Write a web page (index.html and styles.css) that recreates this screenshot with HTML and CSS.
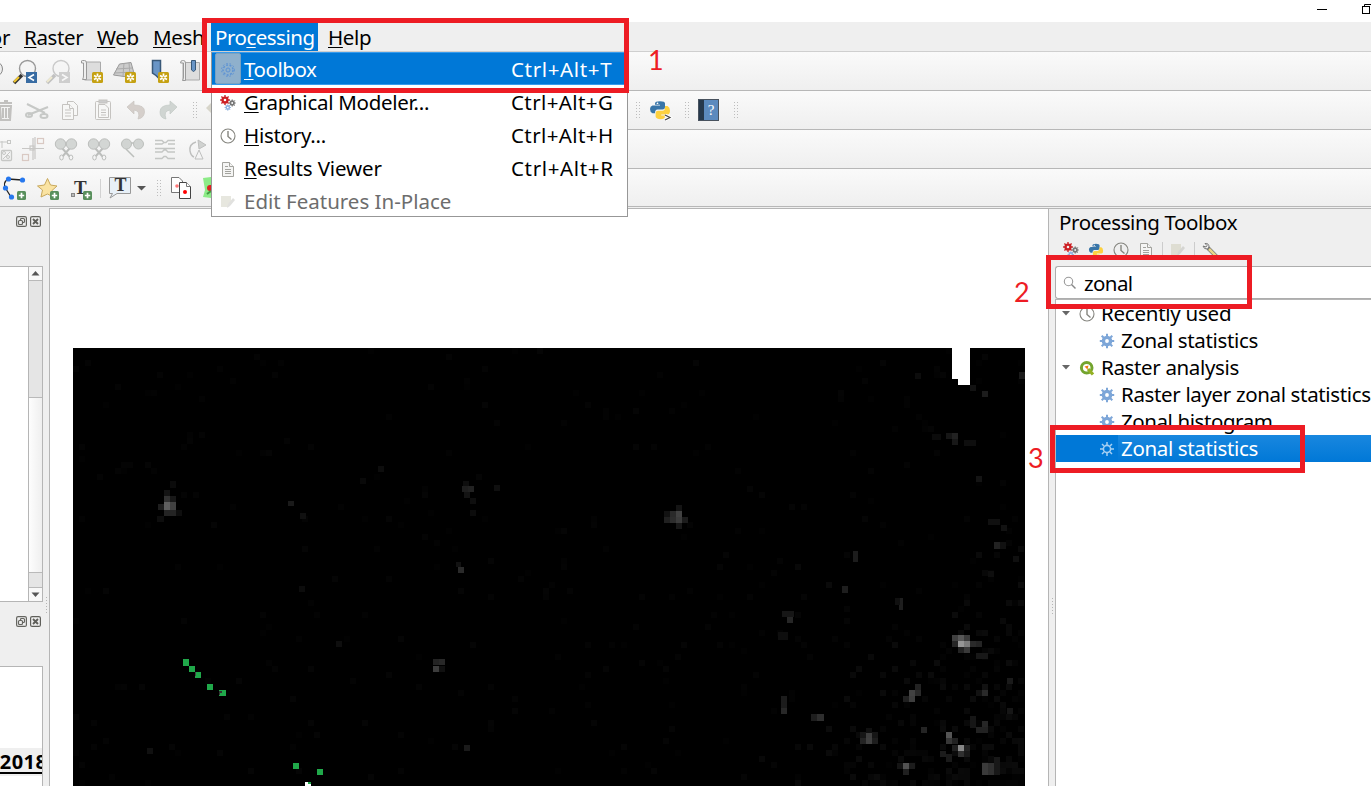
FILE: index.html
```html
<!DOCTYPE html>
<html lang="en">
<head>
<meta charset="utf-8">
<title>QGIS</title>
<link rel="stylesheet" href="styles.css">
</head>
<body>
<svg class="defs" width="0" height="0">
  <defs>
    <g id="gear"><circle r="3.600" fill="none" stroke="currentColor" stroke-width="3.400"/><path d="M0-4V-7.200M0 4V7.200M-4 0H-7.200M4 0H7.200M-3-3L-5.300-5.300M3 3L5.300 5.300M-3 3L-5.300 5.300M3-3L5.300-5.300" stroke="currentColor" stroke-width="2"/></g>
    <g id="models"><use href="#gear" transform="translate(5 5) scale(.68)" color="#cc1f24"/><use href="#gear" transform="translate(12.200 8) scale(.5)" color="#777"/><use href="#gear" transform="translate(7.800 12.500) scale(.45)" color="#8fb2df"/></g>
    <g id="clock" fill="none" stroke="#85857f" stroke-width="1.100"><circle cx="8" cy="8" r="7"/><path d="M8 3V8.500L11.500 11.500" stroke-width="1.400"/></g>
    <g id="doc" fill="#f5f5f4" stroke="#a3a39e"><path d="M2.500 1.500H9.500L13.500 5.500V15.500H2.500Z"/><path d="M9.500 1.500V5.500H13.500M5 5.500H8M5 8.500H11M5 10.500H11M5 12.500H11"/></g>
    <g id="edit"><path d="M1 2H11V9L8 13H1Z" fill="#deddd2"/><path d="M7 14L8 10L13 4L15 6L10 12Z" fill="#d5d5d2"/></g>
    <g id="star-badge"><rect width="11" height="11" rx="1.500" fill="#c5a112"/><path d="M5.500 1.500V9.500M2 3.500L9 7.500M9 3.500L2 7.500" stroke="#fff" stroke-width="1.700"/><circle cx="5.500" cy="5.500" r="1.100" fill="#c5a112"/></g>
    <g id="plus-badge"><rect width="9" height="9" rx="1.500" fill="#588f5c"/><path d="M4.500 1.800V7.200M1.800 4.500H7.200" stroke="#fff" stroke-width="1.700"/></g>
    <g id="python"><path d="M4 7V3Q4 1 8 1T12 3V6Q12 8 10 8H6Q4 8 4 11H2Q0 10 0 7.500T2 4.500H8V4H4Z" fill="#3875a8"/><path d="M12 5H14Q16 6 16 9T14 12H9V13H12V14Q12 16 8.500 16T4.500 14V11Q4.500 9 6.500 9H10Q12 9 12 6Z" fill="#fdd140"/><circle cx="6" cy="2.700" r=".7" fill="#fff"/></g>
    <g id="grip" stroke="#bdbdbd" stroke-width="1" stroke-dasharray="1 2"><path d="M.5 0V17M3.500 0V17"/></g>
    <g id="dock" fill="none" stroke="#666661" stroke-width="1.200"><rect x=".6" y=".6" width="9.800" height="9.800" rx="1.500"/><rect x="4.500" y="2.500" width="4" height="4" rx="1"/><rect x="2.500" y="4.500" width="4" height="4" rx="1" fill="#efefef"/></g>
    <g id="close" fill="none" stroke="#5f5f5a" stroke-width="1.200"><rect x=".6" y=".6" width="9.800" height="9.800" rx="1.500"/><path d="M3 3L8 8M8 3L3 8" stroke-width="1.900"/></g>
    <g id="cut" fill="#d3d6d4" stroke="#bcbebc"><path d="M-4-1L4 8M4-1L-4 8" stroke-width="2"/><circle cx="-5.500" cy="-5" r="5.200"/><circle cx="5.500" cy="-5" r="5.200"/><ellipse cx="-4.500" cy="8.500" rx="1.800" ry="2.500" fill="#f4f4f4"/><ellipse cx="5" cy="8.500" rx="1.800" ry="2.500" fill="#f4f4f4"/></g>
  </defs>
</svg>

<div class="window">
  <div class="titlebar">
    <svg width="60" height="22" viewBox="1311 0 60 22" fill="none" stroke="#000"><path d="M1317 9.500H1327M1364.500 6V4.500H1371"/><rect x="1362.500" y="6.500" width="7" height="7"/></svg>
  </div>
  <nav class="menubar">
    <span class="menu m-vector">Vect<u>o</u>r</span><span class="menu m-raster"><u>R</u>aster</span><span class="menu m-web"><u>W</u>eb</span><span class="menu m-mesh"><u>M</u>esh</span><span class="menu m-processing">Pro<u>c</u>essing</span><span class="menu m-help"><u>H</u>elp</span>
  </nav>

  <div class="toolbar">
    <svg width="211" height="38" viewBox="0 52 211 38">
      <circle cx="-5" cy="69" r="7.500" fill="#eee" stroke="#888"/>
      <path d="M14 83L22 75" stroke="#333" stroke-width="3.500"/><path d="M14 82L19 77" stroke="#f2c830" stroke-width="2.200"/>
      <circle cx="27.500" cy="68.500" r="8" fill="#f5f5f5" stroke="#999" stroke-width="1.400"/><rect x="26" y="72" width="11" height="11" fill="#386ca3"/><path d="M34 74.500L29 77.500L34 80.500" fill="none" stroke="#fff" stroke-width="1.600"/>
      <g opacity=".4"><path d="M47 83L55 75" stroke="#777" stroke-width="3.500"/><path d="M47 82L52 77" stroke="#eadd9e" stroke-width="2"/><circle cx="61" cy="68.500" r="8" fill="#f5f5f5" stroke="#888" stroke-width="1.400"/><rect x="59" y="72" width="11" height="11" fill="#999"/><path d="M62 74.500L67 77.500L62 80.500" fill="none" stroke="#fff" stroke-width="1.600"/></g>
      <path d="M84.500 62H100.500V80H84.500Z" fill="#ddd" stroke="#aaa"/><path d="M81.500 62Q81 60.500 82.500 60.500H84.500Q86.500 60.500 86.500 63V79.500H82.500Q83.500 78 83.500 76V63H81.500Z" fill="#eee" stroke="#999"/><use href="#star-badge" x="92" y="72"/>
      <path d="M119.500 64L131 62.500L134.500 75L124 76.500L113.500 75Z" fill="#ccc" stroke="#999"/><path d="M116 69L132 68M124 63L123 76M129 63L130 75M114 73L134 72" stroke="#aaa"/><use href="#star-badge" x="125" y="72"/>
      <path d="M152.500 60.500H160.500V80L156 75.500L152.500 73Z" fill="#6995c6" stroke="#385878" stroke-width="1.500"/><use href="#star-badge" x="158" y="72"/>
      <path d="M183 62.500H199.500V80H183Z" fill="#ddd" stroke="#aaa"/><path d="M180.500 63Q180.500 60.500 182.500 60.500H183.500Q185.500 60.500 185.500 63V80.500H182.500Q183.500 79 183.500 77V63H180.500Z" fill="#eee" stroke="#999"/><path d="M191.500 60.500H195.500V70L193.500 71.500L191.500 70Z" fill="#6995c6" stroke="#385878"/>
    </svg>
  </div>
  <div class="toolbar">
    <svg width="760" height="38" viewBox="0 91 760 38">
      <g fill="none" stroke="#c2c1bf" stroke-width="2"><path d="M-1 103H12M0 106H11L10 120H1ZM4 101H8M3 108V118M6 108V118M9 108V118"/></g>
      <g fill="none" stroke="#c6c8c6" stroke-width="2"><path d="M27 104L45 113M28 115L48 107"/><ellipse cx="44" cy="116" rx="3.500" ry="2"/><ellipse cx="29" cy="115" rx="3" ry="2"/></g>
      <g fill="#f7f7f6" stroke="#c5c3c0"><path d="M67.500 101.500H73.500L77.500 105.500V115.500H67.500Z"/><path d="M62.500 104.500H69.500L73.500 108.500V119.500H62.500Z"/><path d="M69.500 104.500V108.500H73.500M65 110H71M65 113H71M65 116H71"/></g>
      <g fill="#f7f7f6" stroke="#c5c3c0"><rect x="95.500" y="101.500" width="15" height="18" rx="1"/><rect x="99" y="100" width="8" height="3" fill="#ccc"/><path d="M98.500 104.500H105L108.500 108V117.500H98.500Z"/><path d="M101 110H106M101 112.500H106M101 115H106"/></g>
      <path d="M127 107L134 101V105Q145 105 144.500 112Q144 118 138 119Q141 111 134 110V114Z" fill="#d5cfcb" stroke="#c9c4c0" stroke-width=".7"/>
      <path d="M177 107L170 101V105Q160 105 160 112Q160 118 166 119Q163 111 170 110V114Z" fill="#d0d5d2" stroke="#c2c8c4" stroke-width=".7"/>
      <use href="#grip" x="193" y="102"/>
      <path d="M206 108L211 103V113Z" fill="#d7d5ca"/>
      <use href="#grip" x="636" y="102"/>
      <use href="#python" transform="translate(650 100) scale(1.250 1.200)"/><path d="M665 115L670 117.500L665 120" fill="none" stroke="#fff" stroke-width="3"/><path d="M665 115L670 117.500L665 120" fill="none" stroke="#444" stroke-width="1.200"/>
      <use href="#grip" x="685" y="102"/>
      <rect x="698.500" y="99.500" width="20" height="21" fill="#5c8abe" stroke="#48525e"/><rect x="699" y="100" width="5" height="20" fill="#26384c"/><text class="book-mark" x="708" y="115">?</text>
      <use href="#grip" x="734" y="102"/>
    </svg>
  </div>
  <div class="toolbar">
    <svg width="211" height="38" viewBox="0 130 211 38">
      <g fill="none" stroke="#c6c7c5"><path d="M0 142H8M2 141V148"/><rect x="7.500" y="140.500" width="3" height="3"/><rect x="1.500" y="150.500" width="10" height="10" rx="1" stroke-width="1.300"/><circle cx="4" cy="153" r="1.500"/><circle cx="8" cy="157" r="1.500"/><path d="M3 159L10 152"/></g>
      <g fill="none" stroke="#c8c7c5" stroke-width="1.200"><path d="M22 148.500H44M33 138V160M35 137V159"/><rect x="30" y="146" width="4" height="4"/><rect x="37.500" y="138.500" width="6" height="5" stroke="#d9c9c3"/><rect x="22.500" y="154.500" width="6" height="6" stroke="#d9c9c3"/></g>
      <use href="#cut" transform="translate(66 149)"/><use href="#cut" transform="translate(99 149)"/>
      <g fill="#d1d4d2" stroke="#bcbfbc"><path d="M128 143H136M126 149L134 157" stroke-width="1.500"/><circle cx="126.500" cy="144" r="5"/><circle cx="138.500" cy="144" r="5"/></g>
      <g fill="none" stroke="#c4c6c4" stroke-width="1.300"><path d="M155 140.500H162L164 142.500H166L168 140.500H175M155 144H162L164 142.500M168 144H175M155 148.500H175M155 152H162L164 150H166L168 152H175M155 158.500H162L164 156.500H166L168 158.500H175"/></g>
      <g fill="#d0d2d0" stroke="#bebfbe"><path d="M198 140L206 145L199 149Z"/><path d="M199 150L203 159H195Z" fill="#f4f4f4"/><path d="M196 142Q189 144 190 151Q191 156 194 157" fill="none" stroke-width="1.400"/></g>
    </svg>
  </div>
  <div class="toolbar toolbar-last">
    <svg width="211" height="37" viewBox="0 169 211 37">
      <path d="M8 179L22 180M8 179Q2 183 6 189L11 197" fill="none" stroke="#222" stroke-width="1.300"/><g fill="#2778ee"><circle cx="8.500" cy="179" r="2.600"/><circle cx="22.500" cy="180" r="2.600"/><circle cx="5.500" cy="188" r="2.600"/><circle cx="11.500" cy="197" r="2.600"/></g><use href="#plus-badge" x="17" y="191"/>
      <path d="M47.500 178.500L50.500 185L57 186L52 190.500L53.500 197L47.500 194L41 197L42.500 190L37.500 186L44.500 185Z" fill="#fae3a2" stroke="#c8a85c"/><use href="#plus-badge" x="50" y="191"/>
      <text class="serif-t" x="74" y="194">T</text><rect x="71.500" y="193.500" width="3" height="3" fill="#bbb" stroke="#888"/><use href="#plus-badge" x="83" y="191"/>
      <path d="M100.500 179V198" stroke="#d2d2d2"/>
      <path d="M109.500 177.500H130.500V193.500H117L110 198L112.500 193.500H109.500Z" fill="#e8f0f7" stroke="#999"/><text class="serif-t label-t" x="114.500" y="191">T</text>
      <path d="M137 186H146L141.500 190.500Z" fill="#555"/>
      <use href="#grip" x="157" y="180"/>
      <g fill="#fff" stroke="#777"><path d="M171.500 177.500H179L182.500 181V192.500H171.500Z"/><path d="M179.500 182.500H186.500L190.500 186.500V198.500H179.500Z" stroke="#444"/><path d="M186.500 182.500V186.500H190.500"/></g><circle cx="177" cy="186" r="1.800" fill="#f77"/><circle cx="185" cy="192" r="2" fill="red"/>
      <path d="M203 178L211 177V198L203 197L205 190Z" fill="#8ceb87"/><circle cx="210" cy="188" r="3" fill="#d22"/><path d="M207 194L211 191" stroke="#494" stroke-width="2"/>
    </svg>
  </div>

  <main class="workspace">
    <aside class="left">
      <div class="dock-head"><svg width="11" height="11"><use href="#dock"/></svg><svg width="11" height="11"><use href="#close"/></svg></div>
      <div class="list">
        <div class="scroll">
          <div class="arrow"><svg width="13" height="13"><path d="M2.500 8.500L6.500 4L10.500 8.500Z" fill="#555"/></svg></div>
          <div class="track"></div><div class="thumb"></div><div class="track track-end"></div>
          <div class="arrow"><svg width="13" height="13"><path d="M2.500 4.500H10.500L6.500 9Z" fill="#555"/></svg></div>
        </div>
      </div>
      <div class="dock-head second"><svg width="11" height="11"><use href="#dock"/></svg><svg width="11" height="11"><use href="#close"/></svg></div>
      <div class="list layers"><div class="layer">_2018</div></div>
    </aside>
    <div class="split"><svg width="3" height="18"><path d="M1.500 0V18" stroke="#b5b5b5" stroke-dasharray="1 2"/></svg></div>
    <section class="canvas"><svg id="map" width="998" height="577" viewBox="50 209 998 577" shape-rendering="crispEdges"></svg></section>
    <div class="split split-right"><svg width="3" height="18"><path d="M1.500 0V18" stroke="#b5b5b5" stroke-dasharray="1 2"/></svg></div>
    <aside class="right">
      <h1 class="panel-title">Processing Toolbox</h1>
      <div class="panel-tools">
        <svg width="16" height="16"><use href="#models"/></svg>
        <svg width="16" height="16" viewBox="-1 -1 18 18"><use href="#python"/></svg>
        <svg width="16" height="16"><use href="#clock"/></svg>
        <svg width="16" height="16"><use href="#doc"/></svg>
        <i></i>
        <svg width="16" height="16"><use href="#edit"/></svg>
        <i></i>
        <svg width="16" height="16"><path d="M6 6L15 15" stroke="#777" stroke-width="4"/><path d="M7 7L15 15" stroke="#e9d78a" stroke-width="2.500"/><path d="M3 1.500Q7 1 7 5L5.500 7Q2 7.500 1 4L4 5L5 3.500Z" fill="#eee" stroke="#777"/></svg>
      </div>
      <div class="search"><svg width="14" height="14"><circle cx="5.500" cy="5.500" r="4.200" fill="none" stroke="#999" stroke-width="1.100"/><path d="M8.500 8.500L12.500 12.500" stroke="#888" stroke-width="1.500"/></svg><span>zonal</span></div>
      <div class="tree">
        <div class="row group"><svg class="caret" width="8" height="5"><path d="M0 0H8L4 4.500Z" fill="#666"/></svg><svg width="16" height="16"><use href="#clock"/></svg><span class="t-recent">Recently used</span></div>
        <div class="row leaf"><svg width="16" height="16" viewBox="-8 -8 16 16"><use href="#gear"/></svg><span>Zonal statistics</span></div>
        <div class="row group"><svg class="caret" width="8" height="5"><path d="M0 0H8L4 4.500Z" fill="#666"/></svg><svg width="16" height="16"><circle cx="7.700" cy="7.700" r="5.300" fill="none" stroke="#73a42e" stroke-width="3"/><path d="M9 9L14 14.500" stroke="#93b023" stroke-width="3.200"/><path d="M5.500 6.500L9.500 5.500L8.500 9.500Z" fill="#ee7913"/></svg><span>Raster analysis</span></div>
        <div class="row leaf"><svg width="16" height="16" viewBox="-8 -8 16 16"><use href="#gear"/></svg><span>Raster layer zonal statistics</span></div>
        <div class="row leaf"><svg width="16" height="16" viewBox="-8 -8 16 16"><use href="#gear"/></svg><span class="t-hist">Zonal histogram</span></div>
        <div class="row leaf selected"><svg width="16" height="16" viewBox="-8 -8 16 16"><circle r="3.600" fill="none" stroke="currentColor" stroke-width="1.600"/><path d="M0-4V-7M0 4V7M-4 0H-7M4 0H7M-3-3L-5-5M3 3L5 5M-3 3L-5 5M3-3L5-5" stroke="currentColor" stroke-width="1.500"/></svg><span>Zonal statistics</span></div>
      </div>
    </aside>
  </main>

  <div class="dropdown">
    <div class="item active"><span class="checked"><svg width="16" height="16" viewBox="-8 -8 16 16" fill="none" stroke="#5e93d4"><circle r="5" stroke-width="1.500" stroke-dasharray="2 1.500"/><circle r="6.500" stroke-dasharray="1.500 2"/><circle r="2" /></svg></span><span class="label l-tb"><u>T</u>oolbox</span><span class="key">Ctrl+Alt+T</span></div>
    <div class="item"><svg width="16" height="16"><use href="#models"/></svg><span class="label l-gm"><u>G</u>raphical Modeler...</span><span class="key key-g">Ctrl+Alt+G</span></div>
    <div class="item"><svg width="16" height="16"><use href="#clock"/></svg><span class="label l-gm"><u>H</u>istory...</span><span class="key key-g">Ctrl+Alt+H</span></div>
    <div class="item"><svg width="16" height="16"><use href="#doc"/></svg><span class="label l-rv"><u>R</u>esults Viewer</span><span class="key">Ctrl+Alt+R</span></div>
    <div class="item disabled"><svg width="16" height="16" opacity=".7"><use href="#edit"/></svg><span class="label">Edit Features In-Place</span></div>
  </div>

  <div class="mark mark-1"></div><div class="num num-1">1</div>
  <div class="mark mark-2"></div><div class="num num-2">2</div>
  <div class="mark mark-3"></div><div class="num num-3">3</div>
</div>
<script src="map.js"></script>
</body>
</html>
```

FILE: styles.css
```css
* { box-sizing: border-box; }
body { margin: 0; background: #fff; color: #000; font-family: "Noto Sans", "Open Sans", sans-serif; font-size: 20.5px; overflow: hidden; }
svg { display: block; flex: none; }
.defs { position: absolute; }
.window { position: relative; width: 1371px; height: 786px; overflow: hidden; display: flex; flex-direction: column; background: #efefef; }
.titlebar { height: 22px; flex: none; background: #fff; display: flex; justify-content: flex-end; }
.menubar { height: 30px; flex: none; display: flex; background: #efefef; border-bottom: 1px solid #cfcfcf; }
u { text-decoration-thickness: 1px; text-underline-offset: 2px; text-decoration-skip-ink: none; }
.menu { flex: none; height: 29px; line-height: 31px; white-space: nowrap; letter-spacing: -.35px; }
.m-vector { width: 60px; margin-left: -50px; text-align: right; }
.m-raster { width: 73px; padding-left: 14px; }
.m-web { width: 56px; padding-left: 14px; }
.m-mesh { width: 72px; padding-left: 14px; }
.m-processing { width: 107px; padding-left: 4px; background: #0078d7; color: #fff; letter-spacing: -.5px; }
.m-help { padding-left: 10px; }
.toolbar { height: 39px; flex: none; border-bottom: 1px solid #b7b7b7; background: linear-gradient(#fafafa, #efefef); }
.toolbar-last { height: 38px; }
.book-mark { font: 15px "Liberation Serif", serif; fill: #fff; text-anchor: middle; transform: translateX(3px); }
.serif-t { font: bold 19px "Liberation Serif", serif; fill: #333; }
.label-t { font-size: 18px; }
.workspace { flex: 1; min-height: 0; display: flex; background: #efefef; border-top: 1px solid #efefef; }
.left { width: 43px; flex: none; display: flex; flex-direction: column; }
.dock-head { height: 58px; flex: none; display: flex; gap: 3px; padding: 8px 0 0 16px; }
.second { height: 64px; padding-top: 14px; }
.list { height: 336px; flex: none; background: #fff; border: 1px solid #b5b5b5; border-left: 0; display: flex; justify-content: flex-end; }
.scroll { width: 14px; border-left: 1px solid #b5b5b5; display: flex; flex-direction: column; }
.arrow { height: 13px; background: #f8f8f8; }
.track { height: 118px; background: #e5e5e5; border: solid #b9b9b9; border-width: 1px 0; }
.thumb { flex: 1; background: linear-gradient(90deg, #fdfdfd, #efefef); }
.track-end { height: 16px; }
.layers { height: 130px; align-items: flex-start; overflow: hidden; }
.layer { width: 42px; height: 28px; margin-top: 81px; line-height: 27px; background: #efefef; font-weight: 700; font-size: 20px; text-decoration: underline; text-decoration-thickness: 2px; text-underline-offset: 3px; text-decoration-skip-ink: none; letter-spacing: .5px; text-indent: -9px; white-space: nowrap; overflow: hidden; }
.split { width: 6px; flex: none; padding: 389px 0 0 2px; }
.canvas { width: 1000px; flex: none; background: #fff; border: 1px solid #b5b5b5; border-bottom: 0; }
.right { width: 322px; flex: none; display: flex; flex-direction: column; border-top: 1px solid #b5b5b5; }
.split-right { border-top: 1px solid #b5b5b5; }
.panel-title { margin: 0; padding-left: 4px; height: 33px; flex: none; font-size: 20.5px; font-weight: 400; line-height: 26px; letter-spacing: -.4px; white-space: nowrap; }
.panel-tools { height: 24px; flex: none; display: flex; gap: 9px; padding-left: 8px; }
.panel-tools i { width: 1px; height: 14px; background: #ccc; margin: 0 -1.5px; }
.search { height: 33px; flex: none; display: flex; align-items: center; gap: 7px; padding-left: 7px; background: #fff; border: 1px solid #adadad; border-right: 0; border-radius: 3px 0 0 3px; letter-spacing: -.6px; }
.tree { flex: 1; background: #fff; border: solid #b5b5b5; border-width: 1px 0 0 1px; }
.row { height: 27px; display: flex; align-items: center; white-space: nowrap; line-height: 27px; letter-spacing: -.35px; }
.t-recent { letter-spacing: -.25px; }
.t-hist { letter-spacing: -.42px; }
.group { padding-left: 6px; gap: 6px; }
.group .caret { margin-right: 3px; }
.leaf { padding-left: 43px; gap: 6px; color: #000; }
.leaf svg { color: #7da6d8; width: 16px; }
.selected { background: linear-gradient(90deg, #0078d7 62px, transparent 62px), linear-gradient(#1987df, #0078d7); color: #fff; }
.selected svg { color: #a5cff2; }
.dropdown { position: absolute; left: 211px; top: 52px; width: 417px; height: 165px; background: #fff; border: 1px solid #979797; border-top: 0; }
.item { height: 33px; display: flex; align-items: center; padding: 0 14px 0 8px; line-height: 30px; white-space: nowrap; }
.item svg { position: relative; top: 1px; }
.item .label { margin-left: 8px; flex: 1; }
.item .l-tb { margin-left: 3px; letter-spacing: -.45px; }
.l-gm { letter-spacing: -.28px; }
.l-rv { letter-spacing: -.12px; }
.key { width: 102px; letter-spacing: .65px; }
.key-g { letter-spacing: .4px; }
.active { background: #0078d7; color: #fff; border-top: 1px solid #379bed; border-bottom: 1px solid #379bed; padding: 0 14px 0 3px; }
.checked { width: 26px; height: 31px; border: 1px solid #79a2c2; background: #8fb0cc; display: flex; align-items: center; justify-content: center; border-radius: 2px; }
.disabled { color: #6d6d6d; }
.mark { position: absolute; border: 5px solid #ed1c24; }
.mark-1 { left: 202px; top: 18px; width: 427px; height: 75px; }
.mark-2 { left: 1046px; top: 255px; width: 206px; height: 54px; }
.mark-3 { left: 1050px; top: 425px; width: 255px; height: 48px; }
.num { position: absolute; font: 27px/30px Lato, sans-serif; color: #ed1c24; }
.num-1 { left: 648px; top: 45px; }
.num-2 { left: 1014px; top: 277px; }
.num-3 { left: 1028px; top: 443px; }
```

FILE: map.js
```js
const map = document.getElementById("map");
function cell(x, y, w, h, fill) {
  const r = document.createElementNS("http://www.w3.org/2000/svg", "rect");
  r.setAttribute("x", x); r.setAttribute("y", y);
  r.setAttribute("width", w); r.setAttribute("height", h);
  r.setAttribute("fill", fill);
  map.appendChild(r);
}
cell(73, 348, 952, 438, "#000");

// Faint background noise, denser towards the lower right corner.
let seed = 7;
const rnd = () => (seed = (seed * 16807) % 2147483647) / 2147483647;
for (let i = 0; i < 560; i++) {
  const dense = i > 330;
  const col = dense ? 157 - Math.floor(rnd() * rnd() * 45) : Math.floor(rnd() * 158);
  const row = dense ? 72 - Math.floor(rnd() * rnd() * 45) : Math.floor(rnd() * 73);
  const v = Math.floor(2 + rnd() * (dense ? 10 : 4));
  cell(73 + col * 6.02, 348 + row * 6, 6, 6, `rgb(${v},${v},${v})`);
}

// x, y, width, height, grey level
const lights = [
  [952,635,6,6,64],[958,635,6,6,88],[964,635,6,6,60],[952,641,6,6,38],[958,641,6,6,150],[964,641,6,6,125],[970,641,6,6,42],[976,641,6,6,36],[958,647,6,6,35],[964,647,6,6,58],[976,653,12,6,24],
  [915,684,6,6,34],[909,690,6,6,66],[915,690,6,6,42],[909,696,6,6,62],[903,696,6,6,32],
  [982,690,6,6,42],[976,690,6,6,18],[982,684,6,6,18],[1007,678,6,6,26],[1007,708,6,6,22],
  [866,732,6,6,62],[860,738,6,6,36],[866,738,6,6,64],[872,738,6,6,30],[860,732,6,6,22],[872,732,6,6,22],[866,728,6,5,16],
  [946,732,6,6,85],[946,738,6,6,55],[952,738,6,6,34],[958,745,6,6,135],[958,751,6,6,48],[964,745,6,6,34],[952,745,6,6,32],[940,751,6,6,28],[946,754,6,8,26],[964,751,6,6,25],
  [903,763,6,6,82],[903,769,6,6,32],[909,763,6,6,28],[897,763,6,6,20],
  [982,763,6,12,58],[988,763,6,12,48],[994,757,6,18,24],[921,727,6,6,36],[982,721,6,6,38],[976,727,12,6,34],[970,716,6,12,22],
  [817,714,7,7,46],[811,714,6,7,30],[781,696,6,12,28],[781,708,6,6,40],[787,617,6,6,38],[782,611,12,6,22],[778,632,10,8,14],
  [842,586,6,7,30],[899,598,4,12,30],[895,598,5,7,16],[853,551,5,11,28],
  [946,433,6,6,22],[952,433,6,6,34],[952,439,6,6,24],[932,434,9,6,11],[964,440,12,6,14],[982,391,6,6,28],[970,385,6,6,18],[1019,372,6,7,26],[976,476,6,6,20],[988,519,12,6,16],[1001,525,6,6,18],[994,542,7,7,34],[1000,542,6,7,17],[1013,556,6,6,15],[915,373,6,6,12],[988,571,6,6,14],
  [164,496,6,6,50],[164,502,6,8,95],[170,502,6,8,65],[158,504,6,6,30],[164,510,12,6,36],[170,496,6,6,24],[164,490,6,6,20],[157,516,7,6,13],[176,510,6,6,14],[170,481,6,7,11],
  [670,511,6,6,42],[676,511,6,6,65],[670,517,6,6,45],[676,517,6,6,60],[664,517,6,6,32],[682,517,6,6,28],[676,505,6,6,20],[664,511,6,6,18],[676,523,6,6,24],
  [462,486,8,6,30],[468,486,6,6,34],[464,492,6,6,20],[470,498,6,6,14],[463,481,6,5,14],[494,485,6,6,15],[458,567,6,6,42],[456,562,5,5,18],[470,510,6,6,12],[288,501,6,5,26],[300,513,6,6,16],[378,466,6,6,13],
  [433,659,6,6,35],[439,659,6,6,40],[433,666,6,6,60],[439,666,6,6,16],[464,745,6,6,26],[336,641,6,6,14],[147,748,6,6,16],[299,586,6,6,12],[360,478,6,6,9]
];
lights.forEach(([x, y, w, h, v]) => cell(x, y, w, h, `rgb(${v},${v},${v})`));

[[183,659,6,7],[189,666,6,6],[195,672,6,6],[207,684,6,6],[219,690,7,6],[293,763,6,6],[317,769,6,6]]
  .forEach(([x, y, w, h]) => cell(x, y, w, h, "#20a84a"));
cell(195, 672, 1, 4, "#444"); cell(219, 691, 3, 2, "#333"); cell(219, 693, 1, 2, "#333");
cell(305, 782, 6, 2, "#20a84a"); cell(305, 782, 3, 4, "#fff"); cell(308, 784, 3, 2, "#fff");
cell(952, 348, 18, 31, "#fff");
cell(958, 379, 12, 6, "#fff");
```
